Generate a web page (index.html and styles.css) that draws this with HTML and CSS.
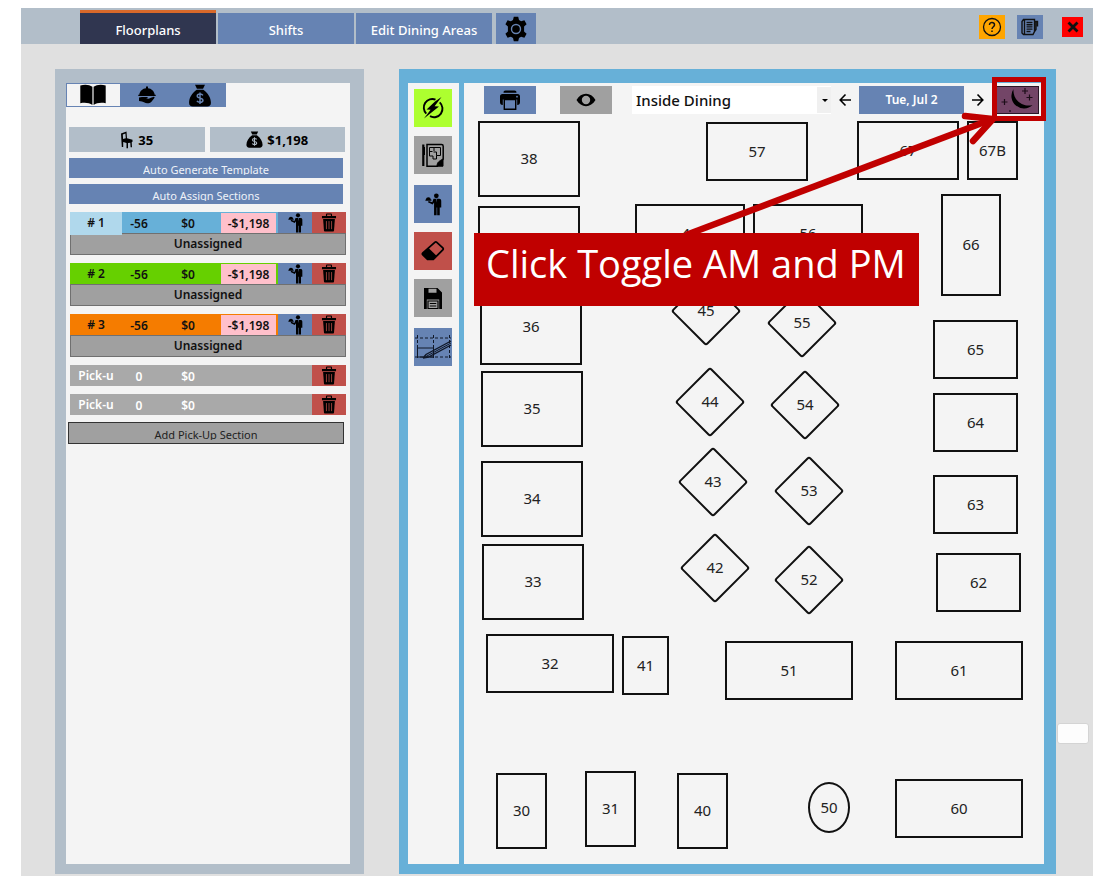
FILE: index.html
```html
<!DOCTYPE html>
<html lang="en">
<head>
<meta charset="utf-8">
<meta name="viewport" content="width=device-width, initial-scale=1">
<title>Floorplans</title>
<link rel="stylesheet" href="styles.css">
</head>
<body>
<svg class="sprite" aria-hidden="true">
  <symbol id="waiter" viewBox="0 0 18 24">
    <circle cx="12" cy="2.800" r="2.500"/>
    <path d="M9 6h6c1.400 0 2.200.8 2.200 2.200v7h-1.600V23.500h-2.700v-8.300h-.6v8.300H9.600V10l-1.500 2-5-2.300.8-1.500 3.800 1.500z"/>
    <path d="M.3 8h6.500V6.800h-.6A2.700 2.700 0 0 0 .9 6.500z"/>
    <path d="M12 6h.8l-.2 4z" fill="#6683b3"/>
  </symbol>
  <symbol id="trash" viewBox="0 0 16 20">
    <path d="M.6 3.200h4.200V1.800C4.800.9 5.300.4 6.200.4h3.600c.9 0 1.400.5 1.400 1.400v1.400h4.200v2.200H.6zM6 3.200h4V1.600H6z" fill-rule="evenodd"/>
    <path d="M1.800 6.200h12.400l-.9 12.200c-.1.800-.5 1.200-1.300 1.200H4c-.8 0-1.200-.4-1.300-1.200z"/>
    <path d="M5.300 8.500v8.500M8 8.500v8.500M10.700 8.500v8.500" stroke="#c0504a" stroke-width=".8" fill="none"/>
  </symbol>
  <symbol id="moneybag" viewBox="0 0 24 24">
    <path d="M6.800.8h10.400l-2 4.200H8.800zM8.600 6h6.800c5 3.500 8 8.500 8 13.500 0 2.600-1.400 4-4 4H4.600c-2.600 0-4-1.400-4-4C.6 14.500 3.600 9.500 8.600 6z"/>
    <path d="M15 11.800c-.6-1-1.700-1.300-3-1.300-1.700 0-2.900.8-2.900 2.100 0 3 6 1.300 6 4.400 0 1.400-1.300 2.200-3.100 2.200-1.400 0-2.600-.5-3.200-1.500M12 8.800v12" fill="none" stroke="var(--cut)" stroke-width="1.500"/>
  </symbol>
</svg>

<div class="app">
  <header class="titlebar">
    <nav class="tabs">
      <button class="tab tab-active" type="button">Floorplans</button>
      <button class="tab" type="button">Shifts</button>
      <button class="tab" type="button">Edit Dining Areas</button>
      <button class="tab tab-gear" type="button" aria-label="Settings">
        <svg width="24" height="26" viewBox="0 0 24 26"><path fill-rule="evenodd" d="M9.800.8h4.400l.8 3.300 2.100 1.200 3.300-1 2.200 3.900-2.500 2.300v5l2.500 2.300-2.200 3.900-3.300-1-2.100 1.200-.8 3.300H9.800L9 21.900l-2.100-1.200-3.300 1-2.200-3.900 2.500-2.300v-5L1.400 8.200l2.200-3.900 3.300 1L9 4.100zM12 7.800a5.200 5.200 0 1 0 0 10.400 5.200 5.200 0 0 0 0-10.400z"/><circle cx="12" cy="13" r="3.800"/></svg>
      </button>
    </nav>
    <div class="window-actions">
      <button class="action action-help" type="button" aria-label="Help">
        <svg width="20" height="20" viewBox="0 0 20 20" fill="none" stroke="#111" stroke-width="1.300"><circle cx="10" cy="10" r="8.500"/><path d="M7.500 8c0-3.600 5.200-3.200 5 0-.1 1.700-2.500 1.900-2.500 4M10 13.500v1.600" stroke-width="1.500"/></svg>
      </button>
      <button class="action action-log" type="button" aria-label="Log">
        <svg width="18" height="18" viewBox="0 0 18 18" fill="none" stroke="#111" stroke-width="1.400"><path d="M13.500 13.500V1.500H2.500l-1.500 2v11.500l1.500 1.500h9.500l1.500-3zM3.500 1.500v15M5.500 4.500h6M5.500 6.700h6M5.500 8.900h6M5.500 11.100h6M5.500 13.500h4M13.500 3.500h3v5M15 3.500v8l-1.500 2"/></svg>
      </button>
      <button class="action action-close" type="button" aria-label="Close">
        <svg width="12" height="12" viewBox="0 0 12 12"><path d="M1.500 1.500l9 9M10.500 1.500l-9 9" stroke="#111" stroke-width="2.800"/></svg>
      </button>
    </div>
  </header>

  <main class="workspace">
    <aside class="sidebar">
      <div class="views">
        <button class="view view-active" type="button" aria-label="Menu">
          <svg width="26" height="22" viewBox="0 0 26 22"><path d="M12.400 2.800C9.500.6 5 .2.300 1.400v17.800c4.500-1 9.200-.5 12.100 1.900zM13.600 2.800C16.500.6 21 .2 25.700 1.400v17.800c-4.500-1-9.200-.5-12.100 1.900z"/></svg>
        </button>
        <button class="view" type="button" aria-label="Service">
          <svg width="18" height="18" viewBox="0 0 18 18"><path d="M.3 10h17.400V8.700h-1C16.200 5 13.300 2.600 10 2.300V.5H8v1.800C4.700 2.600 1.800 5 1.300 8.700h-1zM1 11.500l3-.6 5 .2c1 .1 1 1.400 0 1.500H7.300c3 .6 5-.9 8-1.700 1.200-.3 1.700.6.900 1.400-1.500 1.800-3.200 4.900-5.500 4.900-2.200 0-3.700-.5-6.700-1.800L1 15z"/></svg>
        </button>
        <button class="view" type="button" aria-label="Sales">
          <svg class="cut-blue" width="24" height="23"><use href="#moneybag"/></svg>
        </button>
      </div>

      <div class="stats">
        <div class="stat">
          <svg width="14" height="18" viewBox="0 0 14 18"><path d="M1 2.500 6.500.5 7 7.300l5.500 1.500v2l-.8.500.3 5H10.600l-.3-4.600-2.300.4v5.200H6.500v-5.300L3.200 11v5H1.800zM2.800 3.500l.3 4.500 2.700-.8-.4-4.600z" fill-rule="evenodd"/></svg>
          <span>35</span>
        </div>
        <div class="stat">
          <svg class="cut-steel" width="17" height="17"><use href="#moneybag"/></svg>
          <span>$1,198</span>
        </div>
      </div>

      <div class="auto-actions">
        <button class="wide" type="button"><span>Auto Generate Template</span></button>
        <button class="wide" type="button"><span>Auto Assign Sections</span></button>
      </div>

      <div class="sections">
        <section class="section">
          <div class="row row-blue">
            <span class="cell name"># 1</span><span class="cell">-56</span><span class="cell">$0</span><span class="cell owed">-$1,198</span>
            <button class="icon assign" type="button" aria-label="Assign server"><svg width="15" height="20"><use href="#waiter"/></svg></button>
            <button class="icon remove" type="button" aria-label="Delete section"><svg width="16" height="19"><use href="#trash"/></svg></button>
          </div>
          <button class="server" type="button">Unassigned</button>
        </section>
        <section class="section">
          <div class="row row-green">
            <span class="cell name"># 2</span><span class="cell">-56</span><span class="cell">$0</span><span class="cell owed">-$1,198</span>
            <button class="icon assign" type="button" aria-label="Assign server"><svg width="15" height="20"><use href="#waiter"/></svg></button>
            <button class="icon remove" type="button" aria-label="Delete section"><svg width="16" height="19"><use href="#trash"/></svg></button>
          </div>
          <button class="server" type="button">Unassigned</button>
        </section>
        <section class="section">
          <div class="row row-orange">
            <span class="cell name"># 3</span><span class="cell">-56</span><span class="cell">$0</span><span class="cell owed">-$1,198</span>
            <button class="icon assign" type="button" aria-label="Assign server"><svg width="15" height="20"><use href="#waiter"/></svg></button>
            <button class="icon remove" type="button" aria-label="Delete section"><svg width="16" height="19"><use href="#trash"/></svg></button>
          </div>
          <button class="server" type="button">Unassigned</button>
        </section>
        <div class="row row-pickup">
          <span class="cell name">Pick-u</span><span class="cell">0</span><span class="cell">$0</span>
          <button class="icon remove" type="button" aria-label="Delete section"><svg width="16" height="19"><use href="#trash"/></svg></button>
        </div>
        <div class="row row-pickup">
          <span class="cell name">Pick-u</span><span class="cell">0</span><span class="cell">$0</span>
          <button class="icon remove" type="button" aria-label="Delete section"><svg width="16" height="19"><use href="#trash"/></svg></button>
        </div>
      </div>
      <button class="wide wide-grey" type="button"><span>Add Pick-Up Section</span></button>
    </aside>

    <section class="planner">
      <div class="tools">
        <div class="tool-group">
          <button class="tool lime" type="button" aria-label="Auto">
            <svg width="22" height="24" viewBox="0 0 22 24"><path d="M13.500 3.700A8.500 8.500 0 0 0 4.300 17.600M8 20.200A8.500 8.500 0 0 0 17.700 6.400" fill="none" stroke="#000" stroke-width="1.900"/><path d="M19.500 1 12.600 10.200l4.400.2L2 22.500 8.600 13.800l-4-.3L13 5.500z"/></svg>
          </button>
          <button class="tool grey" type="button" aria-label="Edit layout">
            <svg width="24" height="26" viewBox="0 0 24 26" fill="none" stroke="#000"><path d="M2.300 2.500v21.500" stroke-width="2.200"/><path d="M3.500 5v8" /><path d="M6 2.500h14.500c1 0 1.700.7 1.700 1.700V17l-6 7.200H6z" stroke-width="1.500"/><path d="M8.500 5.500h11v8h-4v3.500h-3.500v-3h-3.500zM13 5.500V9M8.500 9.500h3M15.500 13.500v-3.500h-3"/><path d="M22 17v7.200h-6c0-4 2-5 6-7.200z" fill="#000"/></svg>
          </button>
        </div>
        <div class="tool-group">
          <button class="tool blue" type="button" aria-label="Servers"><svg width="17" height="23"><use href="#waiter"/></svg></button>
          <button class="tool red" type="button" aria-label="Erase">
            <svg width="24" height="22" viewBox="0 0 24 22"><path d="M13.800 2.300a1.500 1.500 0 0 1 2 0l6 5.600c.6.600.6 1.400 0 2l-9.500 9.400H6.500l-4.600-4.400c-.6-.6-.6-1.400 0-2z" fill="none" stroke="#000" stroke-width="1.800"/><path d="m7.500 8 8 7.700-3.500 3.700H6.500l-4.600-4.600v-1.500z"/></svg>
          </button>
          <button class="tool grey" type="button" aria-label="Save">
            <svg width="20" height="23" viewBox="0 0 20 23"><path fill-rule="evenodd" d="M1 1h13.500L19 5.500V22h-2.800v-9.500H3.800V22H1zM5.500 1.800v4h8v-4z"/><path d="M5 14h10v7.500H5zM6.800 16.500h6.500M6.800 19h6.500" fill="none" stroke="#000" stroke-width="1.200"/></svg>
          </button>
        </div>
        <div class="tool-group">
          <button class="tool blue" type="button" aria-label="Draw lines">
            <svg width="38" height="38" viewBox="0 0 38 38" fill="none" stroke="#101828"><path d="M1 10h36M1 29h36M3.500 7v24M19.500 7v24M35.500 7v24" stroke-dasharray="3 2"/><path d="M3.500 20h16v9h-16z"/><path d="M9 30 12 26.500 37 13M9 30l5.500-1L37 17" stroke-width="1.400"/><path d="M12 28.500 37 15"/></svg>
          </button>
        </div>
      </div>

      <div class="floor">
        <div class="floorbar">
          <button class="bar-button blue" type="button" aria-label="Print">
            <svg width="22" height="20" viewBox="0 0 22 20"><path d="M4.500 2.800C4.500 1.200 5.200.5 6.500.5h9c1.300 0 2 .7 2 2.300zM3.500 4h15c1.600 0 2.500 1 2.500 2.500V12c0 1.800-.8 3-2.800 3V9.500H3.800V15C1.800 15 1 13.800 1 12V6.500C1 5 1.900 4 3.500 4z"/><path d="M5.300 9.500h11.400v9.700H5.300z" fill="#6683b3" stroke="#000" stroke-width="1.400"/><circle cx="18" cy="6.700" r=".9" fill="#6683b3"/></svg>
          </button>
          <button class="bar-button grey" type="button" aria-label="Preview">
            <svg width="20" height="14" viewBox="0 0 20 14"><path fill-rule="evenodd" d="M.5 7C3 3 6.200.8 10 .8S17 3 19.500 7C17 11 13.800 13.200 10 13.200S3 11 .5 7zM10 2.800a4.200 4.200 0 1 0 0 8.400 4.200 4.200 0 0 0 0-8.400z"/></svg>
          </button>
          <div class="picker">
            <select class="area" aria-label="Dining area"><option>Inside Dining</option></select>
            <span class="caret"></span>
          </div>
          <div class="dates">
            <button class="arrow" type="button" aria-label="Previous day"><svg width="12" height="14" viewBox="0 0 12 14"><path d="M12 7H1.500M6.500 1.500 1.200 7l5.300 5.500" fill="none" stroke="#000" stroke-width="1.600"/></svg></button>
            <button class="date" type="button">Tue, Jul 2</button>
            <button class="arrow" type="button" aria-label="Next day"><svg width="12" height="14" viewBox="0 0 12 14"><path d="M0 7h10.500M5.500 1.500 10.800 7l-5.300 5.500" fill="none" stroke="#000" stroke-width="1.600"/></svg></button>
          </div>
          <button class="moon" type="button" aria-label="Toggle AM and PM">
            <svg width="34" height="24" viewBox="0 0 34 24"><path d="M12.500 1A12.500 12.500 0 0 0 31.500 17 15 15 0 0 1 12.500 1z"/><path d="M24 0v6M21 3h6M28.500 6.500v6M25.500 9.500h6M3.500 11v6M.5 14h6M9 22v2" stroke="#1c0d18" stroke-width="1.200"/></svg>
          </button>
        </div>

        <div class="plan">
          <div class="table mid t38">38</div>
          <div class="table mid t37"></div>
          <div class="table mid t36">36</div>
          <div class="table mid t35">35</div>
          <div class="table mid t34">34</div>
          <div class="table mid t33">33</div>
          <div class="table long t32">32</div>
          <div class="table slim t41">41</div>
          <div class="table tall t30">30</div>
          <div class="table tall t31">31</div>
          <div class="table tall t40">40</div>
          <div class="table round t50">50</div>
          <div class="table long t60">60</div>
          <div class="table long t61">61</div>
          <div class="table long t51">51</div>
          <div class="table small t62">62</div>
          <div class="table small t63">63</div>
          <div class="table small t64">64</div>
          <div class="table small t65">65</div>
          <div class="table post t66">66</div>
          <div class="table wide-top t67">67</div>
          <div class="table slim-top t67b">67B</div>
          <div class="table wide-top t57">57</div>
          <div class="table booth t46">46</div>
          <div class="table booth t56">56</div>
          <div class="table diamond t45">45</div>
          <div class="table diamond t55">55</div>
          <div class="table diamond t44">44</div>
          <div class="table diamond t54">54</div>
          <div class="table diamond t43">43</div>
          <div class="table diamond t53">53</div>
          <div class="table diamond t42">42</div>
          <div class="table diamond t52">52</div>
        </div>

        <svg class="pointer" width="582" height="160" viewBox="0 0 582 160" fill="none" stroke="#c00000" aria-hidden="true">
          <path d="M222 152 526 37" stroke-width="6.500"/>
          <path d="M501 33l28 3-20 22" stroke-width="6.500" stroke-linecap="round"/>
          <path d="M530.500-3.500h49v39h-49z" stroke-width="5"/>
        </svg>
        <p class="callout">Click Toggle AM and PM</p>
      </div>
    </section>
    <div class="drag-handle"></div>
  </main>
</div>
</body>
</html>
```

FILE: styles.css
```css
* { box-sizing: border-box; }

:root {
  --blue: #6683b3;
  --steel: #b2bec9;
  --sky: #67b0d8;
  --grey: #a0a0a0;
  --brick: #c0504a;
  --paper: #f4f4f4;
}

body {
  margin: 0;
  background: #fff;
  color: #111;
  font: 600 12px/20px "Noto Sans", "Open Sans", sans-serif;
}

button {
  margin: 0;
  padding: 0;
  border: 0;
  color: inherit;
  font: inherit;
  cursor: pointer;
  display: flex;
  align-items: center;
  justify-content: center;
}

svg { display: block; flex: none; }
.sprite { position: absolute; width: 0; height: 0; }

.blue { background: var(--blue); }
.grey { background: var(--grey); }
.red { background: var(--brick); }
.lime { background: #adff2f; }
.cut-blue { --cut: #6683b3; }
.cut-steel { --cut: #b2bec9; }

.app {
  display: flex;
  flex-direction: column;
  margin: 8px 21px 0;
  min-height: calc(100vh - 15px);
  background: #e0e0e0;
}

/* Title bar */
.titlebar {
  display: flex;
  justify-content: space-between;
  height: 36px;
  padding: 0 10px 0 59px;
  background: var(--steel);
}
.tabs { display: flex; align-items: flex-end; gap: 2px; }
.tab {
  width: 136px;
  height: 31px;
  padding-top: 2px;
  background: var(--blue);
  color: #fff;
  font-size: 13px;
  font-weight: 500;
}
.tab-active {
  height: 34px;
  border-top: 3px solid #d9692a;
  background: #303650;
}
.tab-gear { width: 40px; padding: 0; margin-left: 2px; }
.window-actions { display: flex; align-items: center; gap: 12px; padding-top: 2px; }
.action { width: 26px; height: 24px; }
.action-help { background: #ffa500; }
.action-log { background: var(--blue); }
.action-close { width: 21px; height: 20px; margin-left: 7px; background: #f00; }

.workspace {
  position: relative;
  flex: 1;
  display: flex;
  gap: 35px;
  padding: 25px 37px 2px 34px;
}

/* Sidebar */
.sidebar {
  flex: 0 0 309px;
  border: solid var(--steel);
  border-width: 14px 14px 10px 11px;
  background: var(--paper);
}
.views { display: flex; width: 160px; height: 24px; background: var(--blue); }
.view { flex: 1; background: var(--blue); }
.view-active { border: 1px solid var(--blue); background: var(--paper); }

.stats { display: flex; gap: 5px; margin: 20px 5px 6px 3px; }
.stat {
  flex: 1;
  display: flex;
  align-items: center;
  justify-content: center;
  gap: 4px;
  height: 25px;
  background: var(--steel);
  color: #000;
  font-size: 13px;
  font-weight: 700;
}

.auto-actions { display: grid; gap: 6px; margin: 0 7px 8px 3px; }
.wide {
  width: 100%;
  height: 20px;
  background: var(--blue);
  color: #eef2f8;
  font-size: 11px;
  font-weight: 400;
}
.wide span { height: 14px; overflow: hidden; line-height: 18px; }
.wide-grey {
  width: auto;
  min-width: 276px;
  height: 22px;
  margin: 7px 6px 0 2px;
  border: 1px solid #333;
  background: var(--grey);
  color: #222;
}

.sections { display: grid; gap: 8px; margin: 0 4px; }
.section { height: 43px; }
.row {
  display: grid;
  grid-template-columns: 52px 34px 1fr 58px 34px 34px;
  height: 21px;
  color: #111;
}
.cell { text-align: center; line-height: 23px; }
.name { line-height: 22px; }
.row-blue { background: var(--sky); }
.row-blue .name { background: #b0d8ec; }
.row-green { background: #66d000; }
.row-orange { background: #f57c00; }
.row-pickup { background: #a9a9a9; color: #fff; }
.owed { height: 20px; margin: 1px 2px 0 1px; background: #ffc0cb; line-height: 21px; }
.icon { height: 21px; }
.assign { background: var(--blue); }
.remove { grid-column: 6; background: var(--brick); }
.server {
  width: 100%;
  height: 22px;
  border: 1px solid #707070;
  background: var(--grey);
}

/* Planner */
.planner {
  flex: 1;
  display: flex;
  border: solid var(--sky);
  border-width: 14px 12px 10px 9px;
  background: var(--paper);
}
.tools {
  display: flex;
  flex-direction: column;
  gap: 11px;
  flex: 0 0 56px;
  padding: 6px;
  border-right: 5px solid var(--sky);
}
.tool-group { display: grid; gap: 9px; }
.tool { width: 38px; height: 38px; }

.floor {
  position: relative;
  flex: 1;
  display: flex;
  flex-direction: column;
  min-width: 580px;
}
.floorbar {
  display: flex;
  align-items: center;
  height: 34px;
  padding: 0 5px 0 20px;
}
.bar-button { width: 52px; height: 28px; margin-right: 24px; }
.picker { position: relative; flex: 1; margin-left: -4px; }
.area {
  width: 100%;
  height: 28px;
  padding: 0 18px 0 4px;
  border: 0;
  border-radius: 0;
  appearance: none;
  background: #fff;
  color: #111;
  font: 500 15px/20px "Noto Sans", "Open Sans", sans-serif;
}
.caret {
  position: absolute;
  top: 1px;
  right: 0;
  width: 14px;
  height: 26px;
  background: #f0f0f0;
  pointer-events: none;
}
.caret::after {
  content: "";
  position: absolute;
  top: 12px;
  left: 5px;
  border: solid transparent;
  border-width: 3px 3px 0;
  border-top-color: #000;
}
.dates { display: flex; align-items: center; }
.arrow { width: 28px; height: 28px; background: none; }
.date { width: 105px; height: 28px; background: var(--blue); color: #fff; }
.moon {
  width: 43px;
  height: 28px;
  margin-left: 4px;
  border: 1px solid #2a1626;
  background: #734567;
}

/* Floor plan: tables stand at free positions */
.plan { position: relative; flex: 1; min-height: 740px; }
.table {
  position: absolute;
  display: flex;
  align-items: center;
  justify-content: center;
  padding-bottom: 2px;
  border: 2px solid #111;
  color: #222;
  font-size: 15px;
  font-weight: 400;
}
.mid { width: 102px; height: 76px; }
.long { width: 128px; height: 59px; }
.small { width: 85px; height: 59px; }
.tall { width: 51px; height: 76px; }
.slim { width: 47px; height: 59px; }
.slim-top { width: 51px; height: 59px; }
.wide-top { width: 102px; height: 59px; }
.booth { width: 110px; height: 59px; }
.post { width: 60px; height: 102px; }
.round { width: 42px; height: 51px; border-radius: 50%; }
.diamond { width: 68px; height: 68px; border: 0; }
.diamond::before {
  content: "";
  position: absolute;
  inset: 9px;
  border: 2px solid #111;
  border-radius: 3px;
  transform: rotate(45deg);
}

.t38 { left: 14px; top: 4px; }
.t37 { left: 14px; top: 89px; }
.t36 { left: 16px; top: 172px; }
.t35 { left: 17px; top: 254px; }
.t34 { left: 17px; top: 344px; }
.t33 { left: 18px; top: 427px; }
.t32 { left: 22px; top: 517px; }
.t41 { left: 158px; top: 519px; }
.t30 { left: 32px; top: 656px; }
.t31 { left: 121px; top: 654px; }
.t40 { left: 213px; top: 656px; }
.t50 { left: 344px; top: 665px; }
.t60 { left: 431px; top: 662px; }
.t61 { left: 431px; top: 524px; }
.t51 { left: 261px; top: 524px; }
.t62 { left: 472px; top: 436px; }
.t63 { left: 469px; top: 358px; }
.t64 { left: 469px; top: 276px; }
.t65 { left: 469px; top: 203px; }
.t66 { left: 477px; top: 77px; }
.t67 { left: 393px; top: 4px; }
.t67b { left: 503px; top: 4px; }
.t57 { left: 242px; top: 5px; }
.t46 { left: 171px; top: 87px; }
.t56 { left: 289px; top: 87px; }
.t45 { left: 208px; top: 160px; }
.t55 { left: 304px; top: 172px; }
.t44 { left: 212px; top: 251px; }
.t54 { left: 307px; top: 254px; }
.t43 { left: 215px; top: 331px; }
.t53 { left: 311px; top: 340px; }
.t42 { left: 217px; top: 417px; }
.t52 { left: 311px; top: 429px; }

/* Tutorial annotation over the plan */
.pointer { position: absolute; top: 0; left: 0; overflow: visible; pointer-events: none; }
.callout {
  position: absolute;
  top: 150px;
  left: 10px;
  width: 445px;
  height: 73px;
  margin: 0;
  padding: 6px 12px;
  background: #c00000;
  color: #fff;
  font: 400 38px/48px "Open Sans", "Noto Sans", sans-serif;
  white-space: nowrap;
}

.drag-handle {
  position: absolute;
  right: 4px;
  bottom: 132px;
  width: 32px;
  height: 21px;
  border: 1px solid #d4d4d4;
  border-radius: 3px;
  background: #fdfdfd;
}
```
